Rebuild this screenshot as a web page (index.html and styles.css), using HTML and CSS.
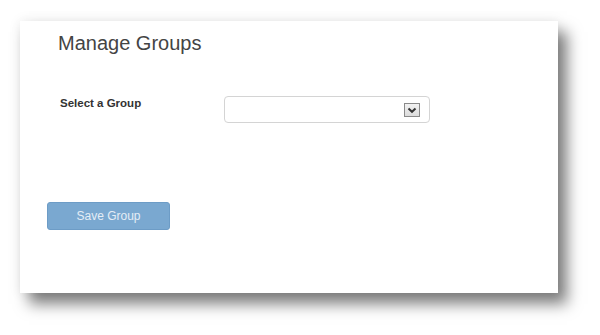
FILE: index.html
```html
<!DOCTYPE html>
<html lang="en">
<head>
    <meta charset="UTF-8">
    <meta name="viewport" content="width=device-width, initial-scale=1.0">
    <link rel="stylesheet" href="styles.css">
    <title>Manage Groups</title>
</head>
<body>
    <div class="panel">
        <h1 class="panel-title">Manage Groups</h1>
        <div class="form-row">
            <label class="form-label" for="groupSelect">Select a Group</label>
            <div class="select-box" id="groupSelect">
                <span class="select-arrow">
                    <svg width="10" height="8" viewBox="0 0 10 8">
                        <path d="M1.5 2.5 L5 5.8 L8.5 2.5" fill="none" stroke="#333" stroke-width="2"/>
                    </svg>
                </span>
            </div>
        </div>
        <button class="save-button">Save Group</button>
    </div>
</body>
</html>
```

FILE: styles.css
```css
html {
    background-color: #fff;
}
body {
    font-family: "Liberation Sans", Arial, sans-serif;
    margin: 0;
    padding: 21px 0 0 20px;
    min-height: 335px;
    box-sizing: border-box;
    background-color: #fff;
    color: #333;
}
.panel {
    box-sizing: border-box;
    width: 538px;
    height: 272px;
    background-color: #fff;
    padding: 11px 0 0 27px;
    box-shadow: 9px 11px 14px rgba(0, 0, 0, 0.5), 0 0 12px rgba(0, 0, 0, 0.08);
}
.panel-title {
    margin: 0 0 0 11px;
    font-size: 20px;
    font-weight: normal;
    line-height: 23px;
    color: #444;
}
.form-row {
    display: flex;
    align-items: flex-start;
    margin-top: 41px;
    margin-left: 13px;
}
.form-label {
    width: 164px;
    margin-top: 1px;
    font-size: 11.5px;
    font-weight: bold;
    line-height: 13px;
    color: #333;
}
.select-box {
    box-sizing: border-box;
    width: 206px;
    height: 27px;
    border: 1px solid #d4d4d4;
    border-radius: 4px;
    display: flex;
    justify-content: flex-end;
    padding: 6px 9px 0 0;
}
.select-arrow {
    box-sizing: border-box;
    width: 16px;
    height: 14px;
    border: 1px solid #8a8a8a;
    background: linear-gradient(#f2f2f2, #dcdcdc);
    display: flex;
    align-items: center;
    justify-content: center;
}
.save-button {
    display: block;
    margin-top: 79px;
    width: 123px;
    height: 28px;
    border: 1px solid #6d9cc6;
    border-radius: 3px;
    background-color: #7aa8d0;
    color: #e4edf6;
    font-family: "Liberation Sans", Arial, sans-serif;
    font-size: 12px;
    padding: 0;
}
```
